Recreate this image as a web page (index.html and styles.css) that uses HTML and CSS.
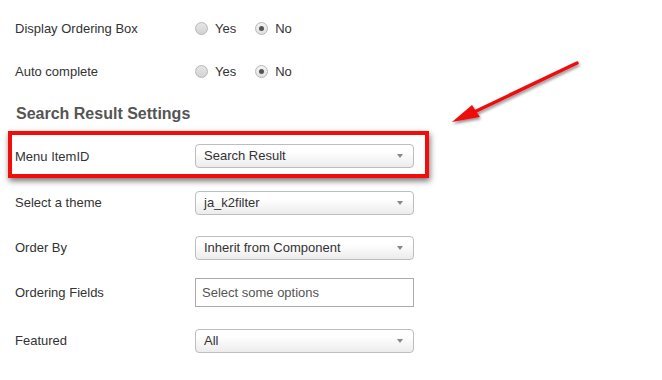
FILE: index.html
```html
<!DOCTYPE html>
<html lang="en">
<head>
    <meta charset="UTF-8">
    <title>Search settings</title>
    <link rel="stylesheet" href="styles.css">
</head>
<body>
    <div class="form">
        <div class="row short">
            <div class="label">Display Ordering Box</div>
            <div class="radios">
                <span class="radio"></span><span class="opt">Yes</span>
                <span class="radio checked"></span><span class="opt">No</span>
            </div>
        </div>
        <div class="row short">
            <div class="label">Auto complete</div>
            <div class="radios">
                <span class="radio"></span><span class="opt">Yes</span>
                <span class="radio checked"></span><span class="opt">No</span>
            </div>
        </div>
        <h3 class="heading">Search Result Settings</h3>
        <div class="highlight">
            <div class="row inner">
                <div class="label">Menu ItemID</div>
                <div class="select">Search Result</div>
            </div>
        </div>
        <div class="row">
            <div class="label">Select a theme</div>
            <div class="select">ja_k2filter</div>
        </div>
        <div class="row">
            <div class="label">Order By</div>
            <div class="select">Inherit from Component</div>
        </div>
        <div class="row">
            <div class="label">Ordering Fields</div>
            <div class="multi">Select some options</div>
        </div>
        <div class="row tall">
            <div class="label">Featured</div>
            <div class="select">All</div>
        </div>
    </div>
    <svg class="arrow" width="150" height="80" viewBox="0 0 150 80">
        <defs>
            <filter id="sh" x="-20%" y="-40%" width="140%" height="180%">
                <feGaussianBlur in="SourceAlpha" stdDeviation="1.6"/>
                <feOffset dx="1" dy="2"/>
                <feComponentTransfer><feFuncA type="linear" slope="0.45"/></feComponentTransfer>
                <feMerge><feMergeNode/><feMergeNode in="SourceGraphic"/></feMerge>
            </filter>
        </defs>
        <g filter="url(#sh)">
            <line x1="127" y1="13" x2="20" y2="64" stroke="#ee1111" stroke-width="3.4" stroke-linecap="round"/>
            <polygon points="2,72 22,55 30,67" fill="#ee1111"/>
        </g>
    </svg>
</body>
</html>
```
FILE: styles.css
```css
body {
    margin: 0;
    background: #fff;
    font-family: "Liberation Sans", Arial, sans-serif;
    font-size: 13px;
    color: #333;
    position: relative;
    width: 662px;
    height: 380px;
    overflow: hidden;
}
.form {
    padding-top: 7px;
}
.row {
    display: flex;
    align-items: center;
    height: 45px;
    padding-left: 15px;
}
.row.short {
    height: 43px;
}
.row.tall {
    height: 51px;
}
.label {
    width: 180px;
    flex: none;
}
.radios {
    display: flex;
    align-items: center;
}
.radio {
    width: 11px;
    height: 11px;
    border-radius: 50%;
    border: 1px solid #b8b8b8;
    background: linear-gradient(#e6e6e6, #d2d2d2);
    margin-left: 0;
    margin-right: 7px;
    position: relative;
}
.radio.checked {
    background: linear-gradient(#f4f4f4, #e0e0e0);
    margin-left: 19px;
}
.radio.checked::after {
    content: "";
    position: absolute;
    left: 3px;
    top: 3px;
    width: 5px;
    height: 5px;
    border-radius: 50%;
    background: #555;
}
.opt {
    color: #333;
}
.heading {
    margin: 0;
    height: 42px;
    line-height: 42px;
    padding-left: 16px;
    font-size: 16px;
    font-weight: bold;
    color: #555;
}
.highlight {
    margin-left: 8px;
    width: 421px;
    height: 47px;
    box-sizing: border-box;
    border: 4px solid #f20d0d;
    box-shadow: 1px 3px 6px rgba(0, 0, 0, 0.55);
    margin-top: -4px;
    margin-bottom: 2px;
}
.row.inner {
    height: 39px;
    padding-left: 3px;
    padding-top: 3px;
    box-sizing: border-box;
}
.select {
    width: 219px;
    height: 24px;
    box-sizing: border-box;
    border: 1px solid #bdbdbd;
    border-radius: 4px;
    background: linear-gradient(#ffffff 30%, #ececec);
    padding-left: 8px;
    line-height: 22px;
    color: #333;
    position: relative;
}
.select::after {
    content: "";
    position: absolute;
    right: 10px;
    top: 9px;
    border-left: 3.5px solid transparent;
    border-right: 3.5px solid transparent;
    border-top: 4px solid #888;
}
.multi {
    width: 219px;
    height: 29px;
    box-sizing: border-box;
    border: 1px solid #aaa;
    padding-left: 6px;
    line-height: 27px;
    color: #555;
}
.arrow {
    position: absolute;
    left: 450px;
    top: 50px;
}
```
